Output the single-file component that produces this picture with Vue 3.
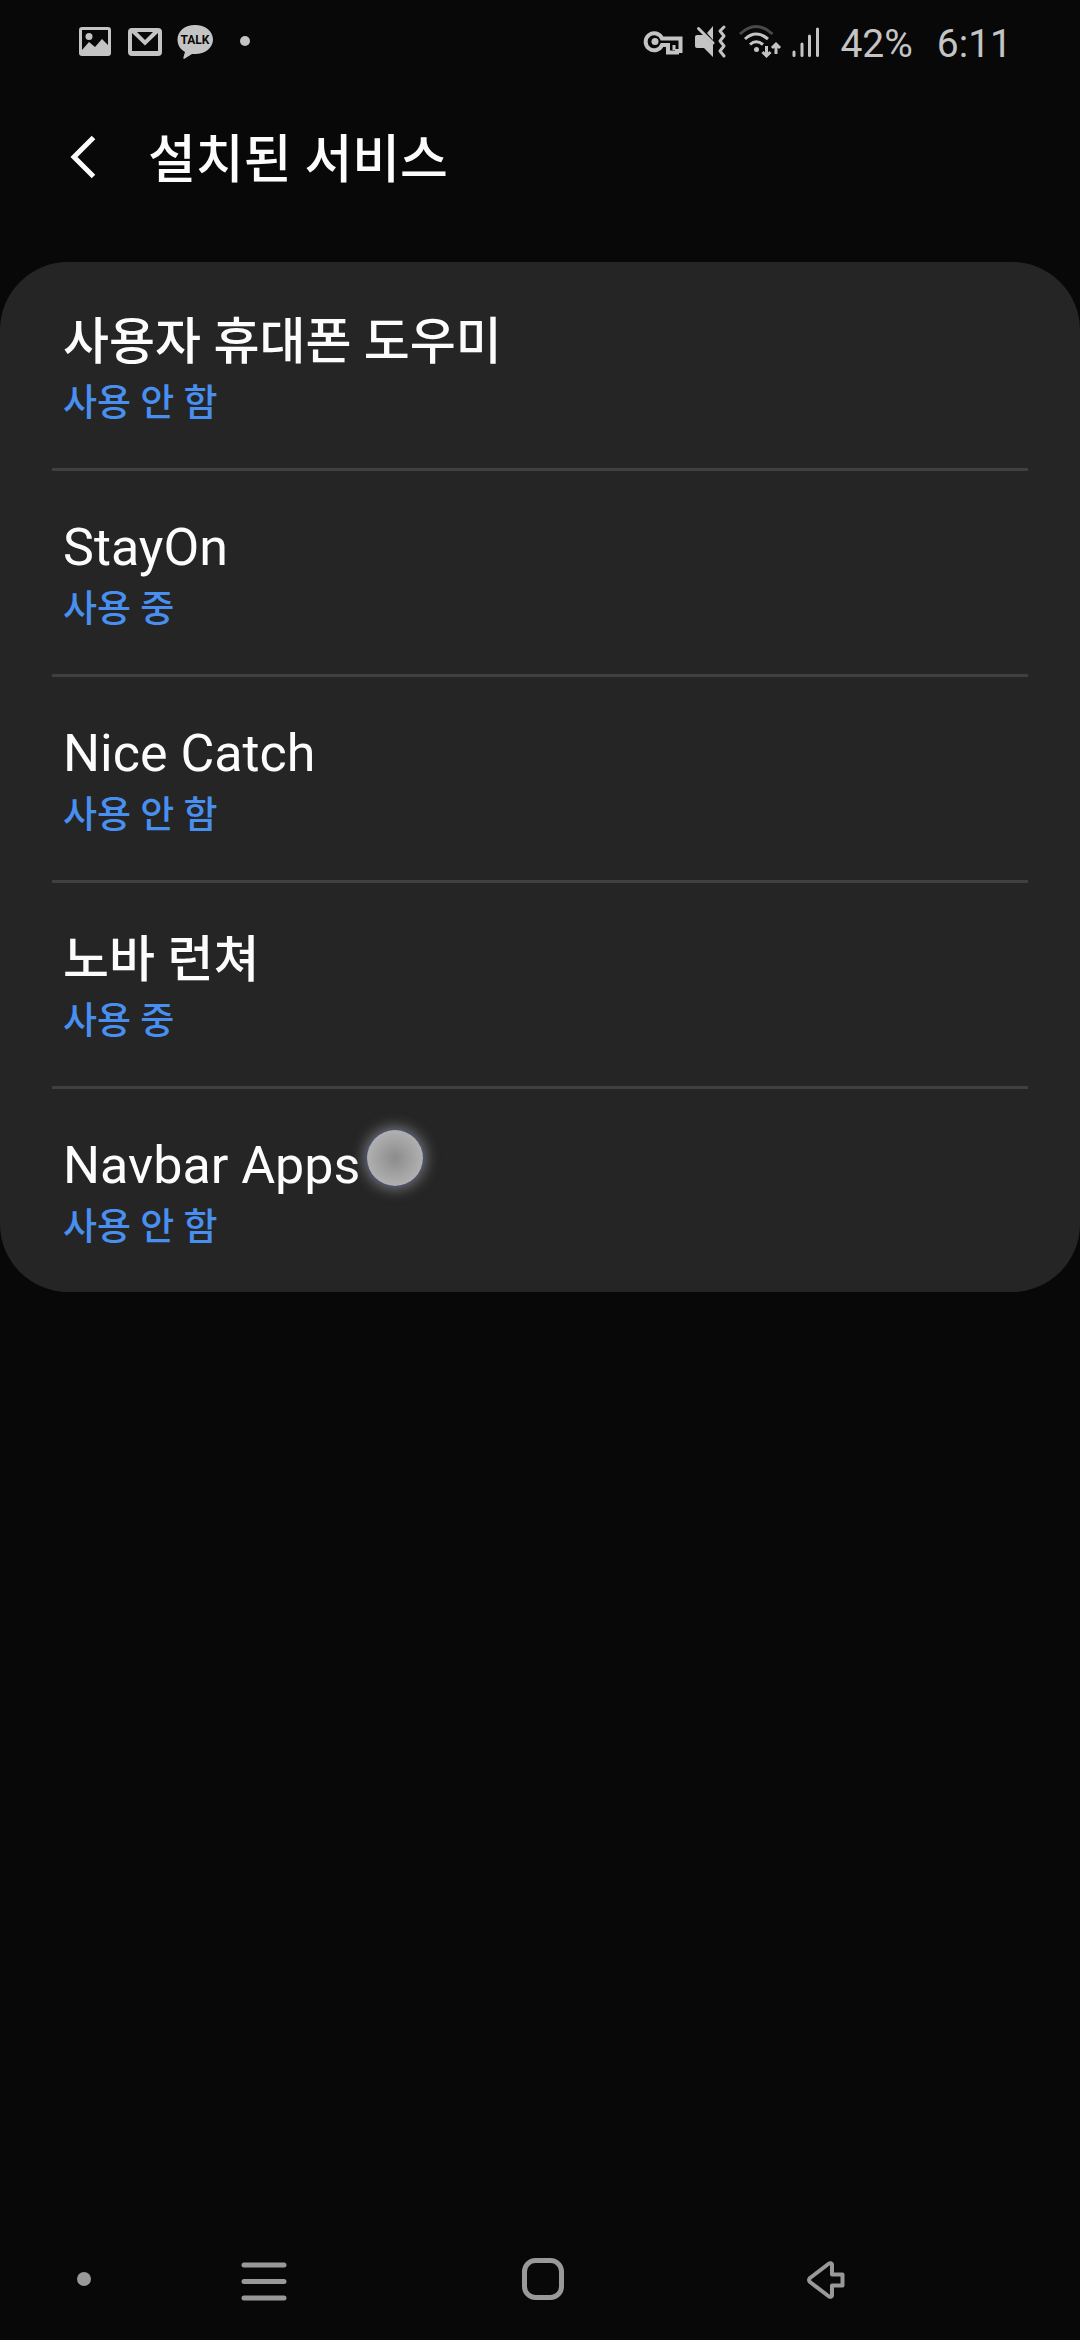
<script setup>
const services = [
  { name: '사용자 휴대폰 도우미', enabled: false },
  { name: 'StayOn', enabled: true, latin: true },
  { name: 'Nice Catch', enabled: false, latin: true },
  { name: '노바 런쳐', enabled: true },
  { name: 'Navbar Apps', enabled: false, latin: true, touched: true },
]
</script>

<template>
  <div class="screen" lang="ko">
    <div class="status">
      <div class="icons notifications">
        <svg width="34" height="40" viewBox="0 0 34 40" aria-hidden="true">
          <path fill-rule="evenodd" d="M4 7h26q3 0 3 3v23q0 3-3 3H4q-3 0-3-3V10q0-3 3-3zM4 10v20l7-8 6 5 7-8 6 6V10z" />
          <circle cx="11" cy="16.500" r="3.500" />
        </svg>
        <svg width="36" height="40" viewBox="0 0 36 40" aria-hidden="true">
          <path fill-rule="evenodd" d="M6 8h26q4 0 4 4v20q0 4-4 4H6q-4 0-4-4V12q0-4 4-4zM6 13v18h26V13L19 25.500zM11 12l8 8 8-8z" />
        </svg>
        <svg width="38" height="40" viewBox="0 0 38 40" aria-hidden="true">
          <path d="M19 5C29 5 37 11 37 19.500S29 34 19 34l-3 0-8 5q-1 0-.5-2l1.500-5C4 29 1.500 25 1.500 19.500 1.500 11 9 5 19 5z" />
          <text class="talk" x="19" y="24" text-anchor="middle">TALK</text>
        </svg>
        <svg width="34" height="40" viewBox="0 0 34 40" aria-hidden="true">
          <circle cx="17" cy="21" r="5" />
        </svg>
      </div>
      <div class="icons system">
        <svg width="42" height="40" viewBox="0 0 42 40" aria-hidden="true">
          <path class="line" stroke-width="4" d="M19 18.500h18.500V31H34v1.500h-9V25h-6A8.500 8.500 0 1 1 19 18.500z" />
          <path class="line" stroke-width="3" d="M31 25v5" />
          <circle cx="12" cy="21.500" r="3.500" />
        </svg>
        <svg width="36" height="40" viewBox="0 0 36 40" aria-hidden="true">
          <path d="M2 17q0-2 2-2h6.500L20 24.500V37l-9-9H4q-2 0-2-2z" />
          <path d="M20 6v14l-6-7z" />
          <path class="line" stroke-width="3" stroke-linecap="round" d="M5.500 8.500 20 23" />
          <path class="line" stroke-width="3" stroke-linecap="round" stroke-linejoin="round" d="M31 7l-4 4 4 5-4 5 4 5-4 5 4 5" />
        </svg>
        <svg width="46" height="40" viewBox="0 0 46 40" aria-hidden="true">
          <path class="line dim" stroke-width="3" d="M3 14Q19-1 35.500 14" />
          <path class="line" stroke-width="3" d="M8 19Q19 9 31 19M13 24.500Q19 19 26 24.500" />
          <circle cx="19.500" cy="29.500" r="2.500" />
          <path class="line" stroke-width="3" d="M29.500 26v9M25.500 32l4 4 4-4M39 34v-9M35 28l4-4 4 4" />
        </svg>
        <svg width="30" height="40" viewBox="0 0 30 40" aria-hidden="true">
          <path class="line" stroke-width="3" stroke-linecap="round" d="M3 32v3.500M11 24v11.500M18.500 16v19.500M26.500 9v26.500" />
        </svg>
        <span class="battery">42%</span>
        <span class="clock">6:11</span>
      </div>
    </div>

    <header class="bar">
      <button class="back" type="button" aria-label="뒤로">
        <svg width="28" height="48" viewBox="0 0 28 48" aria-hidden="true">
          <path d="M24.500 4.500 5 24l19.500 19.500" />
        </svg>
      </button>
      <h1>설치된 서비스</h1>
    </header>

    <main>
      <ul class="card">
        <li v-for="s in services" :key="s.name">
          <button class="row" type="button">
            <span class="name" :class="{ latin: s.latin }">{{ s.name }}</span>
            <span class="state">{{ s.enabled ? '사용 중' : '사용 안 함' }}</span>
          </button>
          <span v-if="s.touched" class="touch"></span>
        </li>
      </ul>
    </main>

    <nav class="nav">
      <button type="button" aria-label="내비게이션 바 숨기기">
        <svg width="48" height="48" viewBox="0 0 48 48" aria-hidden="true"><circle class="dot" cx="24" cy="23" r="7" /></svg>
      </button>
      <button type="button" aria-label="최근 앱">
        <svg width="48" height="48" viewBox="0 0 48 48" aria-hidden="true"><path stroke-linecap="round" d="M4 9h40M4 25.500h40M4 42h40" /></svg>
      </button>
      <button type="button" aria-label="홈">
        <svg width="48" height="48" viewBox="0 0 48 48" aria-hidden="true"><rect x="5.500" y="4.500" width="37" height="37" rx="11" /></svg>
      </button>
      <button type="button" aria-label="뒤로 가기">
        <svg width="48" height="48" viewBox="0 0 48 48" aria-hidden="true"><path class="thin" stroke-linejoin="round" d="M31 8.500v10h10.500v11H31v10q-1 2-3 1L9 26q-2-2 0-4L28 7.500q2-1 3 1z" /></svg>
      </button>
    </nav>
  </div>
</template>

<style>
body {
  margin: 0;
  background: #080808;
}
</style>

<style scoped>
.screen {
  display: flex;
  flex-direction: column;
  min-height: 100vh;
  background: #080808;
  color: #fcfcfc;
  font-family: Roboto, "Noto Sans CJK KR", sans-serif;
}

button {
  border: 0;
  padding: 0;
  background: none;
  color: inherit;
  font: inherit;
}

svg {
  display: block;
}

.status {
  display: flex;
  justify-content: space-between;
  align-items: center;
  height: 80px;
  padding: 0 68px 0 78px;
  color: #c4c4c4;
  font-size: 39px;
  line-height: 48px;
}

.icons {
  display: flex;
  align-items: center;
}

.icons svg {
  fill: currentColor;
}

.notifications {
  gap: 14px;
}

.system {
  gap: 8px;
}

.line {
  fill: none;
  stroke: currentColor;
}

.dim {
  opacity: 0.35;
}

.talk {
  fill: #080808;
  font-size: 12px;
  font-weight: 700;
}

.battery {
  margin: 8px 16px 0 11px;
}

.clock {
  margin-top: 8px;
}

.bar {
  display: flex;
  align-items: center;
  gap: 51px;
  height: 154px;
  padding: 0 69px;
  margin-bottom: 28px;
}

.back path {
  fill: none;
  stroke: #fcfcfc;
  stroke-width: 5;
}

h1 {
  margin: 0;
  padding-top: 8px;
  font-size: 52px;
  line-height: 64px;
  font-weight: 500;
}

.card {
  margin: 0;
  padding: 0;
  list-style: none;
  border-radius: 68px;
  background: #252525;
}

li {
  position: relative;
  padding: 0 52px;
}

.row {
  display: flex;
  flex-direction: column;
  justify-content: center;
  width: 100%;
  height: 206px;
  padding: 10px 11px 0;
  border-top: 3px solid transparent;
  text-align: left;
}

li + li .row {
  border-top-color: #404040;
}

.name {
  font-size: 50px;
  font-weight: 500;
  line-height: 64px;
}

.latin {
  font-size: 52px;
  font-weight: 400;
}

.state {
  color: #488ff0;
  font-size: 37px;
  font-weight: 500;
  line-height: 60px;
}

.touch {
  position: absolute;
  left: 367px;
  top: 44px;
  width: 56px;
  height: 56px;
  border-radius: 50%;
  background: radial-gradient(circle, #8c8c8c, #b0b0b0 70%);
  box-shadow: 0 0 3px 1px #46507c, 0 0 14px 3px #77777a;
}

.nav {
  display: grid;
  grid-template-columns: 168fr 191fr 368fr 196fr 157fr;
  height: 120px;
  margin-top: auto;
}

.nav button {
  display: flex;
  align-items: center;
  justify-content: center;
}

.nav svg {
  fill: none;
  stroke: #999;
  stroke-width: 5;
}

.nav .dot {
  fill: #999;
  stroke: none;
}

.nav .thin {
  stroke-width: 4;
}
</style>
